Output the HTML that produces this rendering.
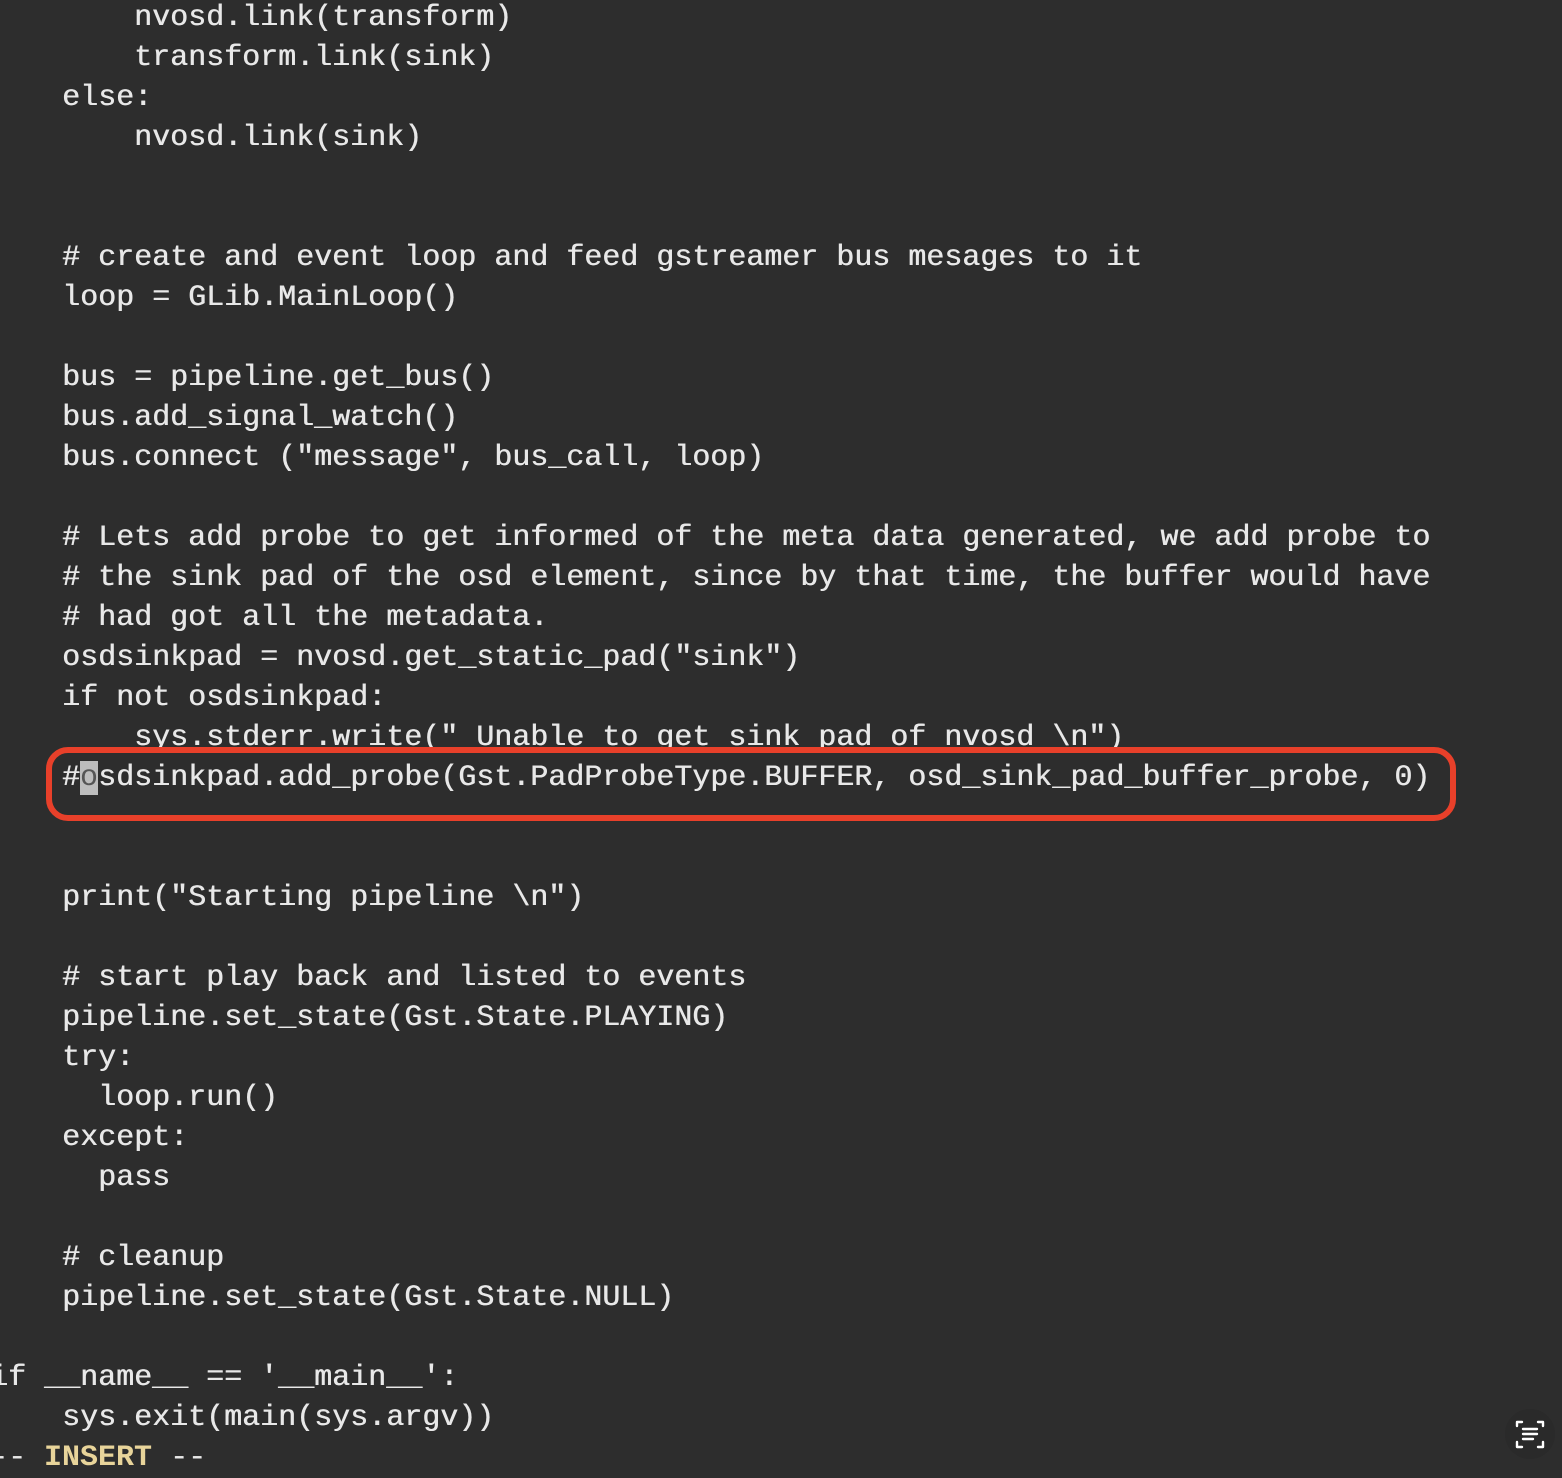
<!DOCTYPE html>
<html><head><meta charset="utf-8"><style>
html,body{margin:0;padding:0;background:#2d2d2d;width:1562px;height:1470px;overflow:hidden}
pre{position:absolute;left:-10px;top:-2px;margin:0;font-family:"Liberation Mono","DejaVu Sans Mono",monospace;font-size:30px;line-height:40px;color:#e8e8e8;letter-spacing:0;text-shadow:0.5px 0 0 #e8e8e8}
.cur{background:#bdbdbd;color:#555;text-shadow:none}
.ins{color:#e8d49a;font-weight:bold;text-shadow:none}
.box{position:absolute;left:46px;top:747px;width:1398px;height:62px;border:6px solid #e8402a;border-radius:22px}
.ic{position:absolute;left:1505px;top:1409px;width:50px;height:50px;border-radius:25px;background:#2a2a2a}
</style></head><body>
<pre>        nvosd.link(transform)
        transform.link(sink)
    else:
        nvosd.link(sink)


    # create and event loop and feed gstreamer bus mesages to it
    loop = GLib.MainLoop()

    bus = pipeline.get_bus()
    bus.add_signal_watch()
    bus.connect ("message", bus_call, loop)

    # Lets add probe to get informed of the meta data generated, we add probe to
    # the sink pad of the osd element, since by that time, the buffer would have
    # had got all the metadata.
    osdsinkpad = nvosd.get_static_pad("sink")
    if not osdsinkpad:
        sys.stderr.write(" Unable to get sink pad of nvosd \n")
    #<span class="cur">o</span>sdsinkpad.add_probe(Gst.PadProbeType.BUFFER, osd_sink_pad_buffer_probe, 0)


    print("Starting pipeline \n")

    # start play back and listed to events
    pipeline.set_state(Gst.State.PLAYING)
    try:
      loop.run()
    except:
      pass

    # cleanup
    pipeline.set_state(Gst.State.NULL)

if __name__ == '__main__':
    sys.exit(main(sys.argv))
-- <span class="ins">INSERT</span> --</pre>
<div class="box"></div>
<div class="ic"><svg width="50" height="50" viewBox="0 0 50 50" fill="none" stroke="#fff" stroke-width="2.4" stroke-linecap="round" stroke-linejoin="round"><path d="M12 17v-4h5M33 13h5v4M38 33v5h-5M17 38h-5v-5M18 20h14M18 25h14M18 30h10"/></svg></div>
</body></html>
